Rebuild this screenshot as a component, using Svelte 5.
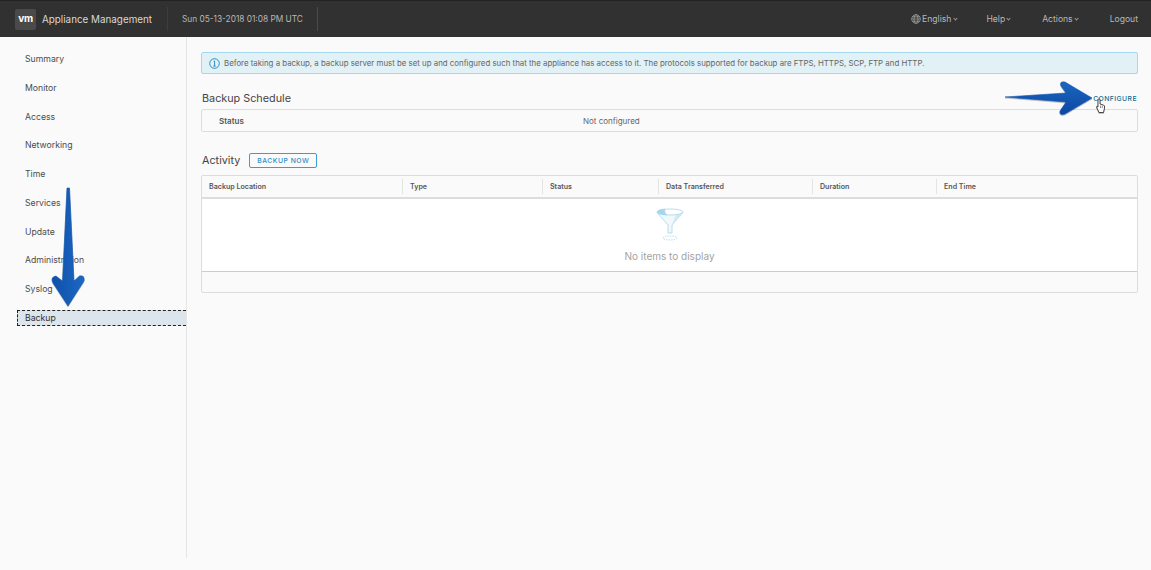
<script>
  const navItems = ['Summary', 'Monitor', 'Access', 'Networking', 'Time', 'Services', 'Update', 'Administration', 'Syslog', 'Backup'];
  const columns = [
    { label: 'Backup Location', width: 201 },
    { label: 'Type', width: 140 },
    { label: 'Status', width: 116 },
    { label: 'Data Transferred', width: 154 },
    { label: 'Duration', width: 124 },
    { label: 'End Time', width: 200 }
  ];
</script>

<div class="page">
  <header class="topbar">
    <div class="logo">vm</div>
    <div class="product">Appliance Management</div>
    <div class="clock">Sun 05-13-2018 01:08 PM UTC</div>
    <nav class="topnav">
      <span class="lang">
        <svg width="10" height="10" viewBox="0 0 10 10" fill="none" stroke="#a8a8a8" stroke-width="0.7">
          <circle cx="5" cy="5" r="4.3" />
          <ellipse cx="5" cy="5" rx="2" ry="4.3" />
          <path d="M0.7 5h8.6M1.3 2.8h7.4M1.3 7.2h7.4" />
        </svg>
        English<i class="caret"></i>
      </span>
      <span class="help">Help<i class="caret"></i></span>
      <span class="actions">Actions<i class="caret"></i></span>
      <span>Logout</span>
    </nav>
  </header>

  <div class="body">
    <aside class="sidebar">
      {#each navItems as item}
        <a href="#top" class="nav-item" class:active={item === 'Backup'}>{item}</a>
      {/each}
    </aside>

    <main class="content">
      <div class="alert">
        <svg width="11" height="11" viewBox="0 0 11 11" fill="none" stroke="#2b8fc4" stroke-width="1">
          <circle cx="5.5" cy="5.5" r="4.8" />
          <path d="M4.6 3h1v5M4.3 8h2.4" />
        </svg>
        <span>Before taking a backup, a backup server must be set up and configured such that the appliance has access to it. The protocols supported for backup are FTPS, HTTPS, SCP, FTP and HTTP.</span>
      </div>

      <div class="schedule-head">
        <h2>Backup Schedule</h2>
        <span class="configure">CONFIGURE</span>
      </div>
      <div class="schedule-box">
        <span class="status-label">Status</span>
        <span class="status-value">Not configured</span>
      </div>

      <div class="activity-head">
        <h2>Activity</h2>
        <button class="backup-now">BACKUP NOW</button>
      </div>

      <div class="grid">
        <div class="grid-head">
          {#each columns as col}
            <div class="cell" style="width: {col.width}px">{col.label}</div>
          {/each}
        </div>
        <div class="grid-body">
          <svg class="funnel" width="28" height="33" viewBox="0 0 28 33" fill="none" stroke="#a5d6ec" stroke-width="0.8">
            <path d="M1 4.500 12 17v8h4v-8L27 4.500" fill="#f1f8fb" />
            <path d="M20 7 16 17v8l0 0v-8L27 4.500Z" fill="#cfe8f4" stroke="none" />
            <ellipse cx="14" cy="4" rx="13" ry="3" fill="#fff" />
            <path d="M1.200 4C2 2 6 1.200 9 1.200 8 3 9 5.500 11 6.800 6 6.800 2 5.500 1.200 4Z" fill="#a5d6ec" />
            <ellipse cx="14" cy="30" rx="7" ry="2" stroke-dasharray="1.500 1" />
          </svg>
          <div class="empty">No items to display</div>
        </div>
        <div class="grid-foot"></div>
      </div>
    </main>
  </div>

  <svg class="overlay" width="1151" height="570" viewBox="0 0 1151 570">
    <defs>
      <linearGradient id="arrowH" x1="0" y1="0" x2="0" y2="1">
        <stop offset="0" stop-color="#1a66c0" />
        <stop offset="1" stop-color="#0d47a1" />
      </linearGradient>
      <linearGradient id="arrowV" x1="0" y1="0" x2="1" y2="0">
        <stop offset="0" stop-color="#0f50aa" />
        <stop offset="1" stop-color="#1c68c4" />
      </linearGradient>
    </defs>
    <path d="M1005 97 1066 93 1061 86Q1059 81 1065 82L1092 98 1065 114Q1059 116 1060 111L1066 102Z" fill="url(#arrowH)" stroke="#1055b0" stroke-width="0.6" stroke-linejoin="round" />
    <path d="M67 188 69.500 188 74 281 79.500 276Q85 275 84 281L68 306 53 283Q50 277 56 276L62.500 281Z" fill="url(#arrowV)" stroke="#1055b0" stroke-width="0.6" stroke-linejoin="round" />
    <path d="M1098 99.500Q1099 98 1100 99.500V104L1103.500 105Q1105 105.500 1104.500 108L1103.500 112.500H1099L1096.500 107Q1096.500 105.500 1098 107Z" fill="#fff" stroke="#222" stroke-width="0.8" stroke-linejoin="round" />
    <path d="M1100.500 105.500v2.500M1102.300 105.500v2.500" stroke="#222" stroke-width="0.5" />
  </svg>
</div>

<style>
  :global(body) {
    margin: 0;
    background: #fafafa;
  }

  .page {
    position: relative;
    width: 1151px;
    height: 570px;
    overflow: hidden;
    background: #fafafa;
    font-family: "Inter", "Liberation Sans", sans-serif;
    color: #565656;
  }

  .topbar {
    display: flex;
    align-items: center;
    height: 36px;
    border-top: 1px solid #222;
    background: #313131;
    color: #c8c8c8;
  }

  .logo {
    width: 21px;
    height: 21px;
    margin-left: 15px;
    border-radius: 2px;
    background: #4a4a4a;
    color: #fff;
    font-size: 10px;
    font-weight: 700;
    line-height: 19px;
    text-align: center;
    letter-spacing: -0.4px;
  }

  .product {
    width: 111px;
    margin-left: 6px;
    font-size: 9.850px;
    color: #d8d8d8;
    white-space: nowrap;
  }

  .clock {
    display: flex;
    align-items: center;
    height: 24px;
    margin-left: 14px;
    padding: 0 14px;
    border-left: 1px solid #3d3d3d;
    border-right: 1px solid #4a4a4a;
    font-size: 8.300px;
    color: #b8b8b8;
    white-space: nowrap;
  }

  .topnav {
    display: flex;
    align-items: center;
    margin-left: auto;
    margin-right: 13px;
    font-size: 8.600px;
    color: #b8b8b8;
  }

  .lang {
    display: flex;
    align-items: center;
    gap: 1px;
    margin-right: 28px;
  }

  .help {
    margin-right: 31px;
  }

  .actions {
    margin-right: 31px;
  }

  .caret {
    display: inline-block;
    width: 2px;
    height: 2px;
    margin: 0 1px 2px 2px;
    border-right: 1px solid #999;
    border-bottom: 1px solid #999;
    transform: rotate(45deg);
  }

  .body {
    display: flex;
    align-items: flex-start;
    height: 533px;
  }

  .sidebar {
    display: flex;
    flex-direction: column;
    flex: none;
    width: 169px;
    height: 507px;
    padding: 14px 0 0 17px;
    border-right: 1px solid #e6e6e6;
  }

  .nav-item {
    display: flex;
    align-items: center;
    height: 16px;
    margin-bottom: 12.750px;
    padding-left: 8px;
    color: #4c4c4c;
    font-size: 8.700px;
    text-decoration: none;
  }

  .nav-item.active {
    height: 14px;
    background: #dce4ec;
    border: 1px dashed #222;
    border-right: none;
    padding-left: 7px;
    color: #333;
  }

  .content {
    flex: 1;
    min-width: 0;
    padding: 15px 13px 0 14px;
  }

  .alert {
    display: flex;
    align-items: center;
    gap: 4px;
    height: 20px;
    padding-left: 7px;
    border: 1px solid #a3d8ee;
    border-radius: 2px;
    background: #e1f1f6;
    font-size: 7.870px;
    color: #666;
    white-space: nowrap;
  }

  h2 {
    margin: 0;
    padding-left: 1px;
    font-size: 10.800px;
    font-weight: 400;
    color: #444;
  }

  .schedule-head {
    display: flex;
    align-items: center;
    justify-content: space-between;
    height: 20px;
    margin-top: 14px;
  }

  .configure {
    font-size: 6.800px;
    font-weight: 500;
    letter-spacing: 0.45px;
    color: #0f6c96;
    margin-right: 1px;
  }

  .schedule-box {
    display: flex;
    align-items: center;
    height: 21px;
    margin-top: 1px;
    border: 1px solid #ddd;
    border-radius: 2px;
    font-size: 8px;
  }

  .status-label {
    width: 364px;
    padding-left: 17px;
    font-weight: 600;
    color: #565656;
  }

  .status-value {
    color: #666;
  }

  .activity-head {
    display: flex;
    align-items: center;
    gap: 9px;
    height: 16px;
    margin-top: 20px;
  }

  .backup-now {
    width: 68px;
    height: 15px;
    padding: 0;
    border: 1px solid #3c9bd0;
    border-radius: 2px;
    background: transparent;
    color: #2a8cc4;
    font-family: inherit;
    font-size: 6.800px;
    font-weight: 500;
    letter-spacing: 0.5px;
  }

  .grid {
    margin-top: 7px;
    border: 1px solid #ddd;
    border-radius: 2px;
  }

  .grid-head {
    display: flex;
    height: 21px;
    border-bottom: 2px solid #ddd;
  }

  .cell {
    display: flex;
    align-items: center;
    flex: none;
    box-sizing: border-box;
    height: 15px;
    margin-top: 3px;
    padding-left: 7px;
    border-right: 1px solid #e4e4e4;
    font-size: 7.100px;
    font-weight: 600;
    color: #565656;
  }

  .cell:last-child {
    border-right: none;
  }

  .grid-body {
    display: flex;
    flex-direction: column;
    align-items: center;
    height: 72px;
    border-bottom: 1px solid #ccc;
    background: #fff;
  }

  .funnel {
    margin-top: 9px;
  }

  .empty {
    margin-top: 9px;
    font-size: 10px;
    color: #a3a3a3;
  }

  .grid-foot {
    height: 20px;
  }

  .overlay {
    position: absolute;
    top: 0;
    left: 0;
    pointer-events: none;
    filter: drop-shadow(0.5px 1px 0.5px rgba(0, 0, 0, 0.25));
  }
</style>
